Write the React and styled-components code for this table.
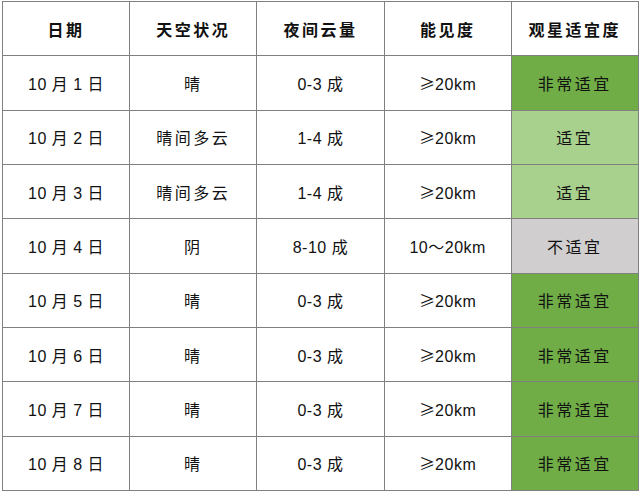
import React from 'react';
import styled, { createGlobalStyle } from 'styled-components';

const GlobalStyle = createGlobalStyle`
  html, body {
    margin: 0;
    padding: 0;
    background: #fff;
  }
`;

const rows = [
  { date: '10 月 1 日', sky: '晴', cloud: '0-3 成', vis: '20km', rate: '非常适宜', level: 'best' },
  { date: '10 月 2 日', sky: '晴间多云', cloud: '1-4 成', vis: '20km', rate: '适宜', level: 'good' },
  { date: '10 月 3 日', sky: '晴间多云', cloud: '1-4 成', vis: '20km', rate: '适宜', level: 'good' },
  { date: '10 月 4 日', sky: '阴', cloud: '8-10 成', vis: '10～20km', rate: '不适宜', level: 'bad' },
  { date: '10 月 5 日', sky: '晴', cloud: '0-3 成', vis: '20km', rate: '非常适宜', level: 'best' },
  { date: '10 月 6 日', sky: '晴', cloud: '0-3 成', vis: '20km', rate: '非常适宜', level: 'best' },
  { date: '10 月 7 日', sky: '晴', cloud: '0-3 成', vis: '20km', rate: '非常适宜', level: 'best' },
  { date: '10 月 8 日', sky: '晴', cloud: '0-3 成', vis: '20km', rate: '非常适宜', level: 'best' },
];

const levelColors = {
  best: '#70ad47',
  good: '#a9d18e',
  bad: '#d0cece',
};

const Page = styled.div`
  padding: 1px 0 0 2px;
`;

const Table = styled.table`
  width: 637px;
  height: 490px;
  border-collapse: collapse;
  table-layout: fixed;
  font-family: "Liberation Sans", "Noto Sans CJK SC", sans-serif;
  font-size: 16px;
  color: #111;
`;

const Row = styled.tr`
  height: 54px;
`;

const HeadCell = styled.th`
  border: 1px solid #808080;
  font-weight: 700;
  letter-spacing: 2.5px;
  text-align: center;
  vertical-align: middle;
  padding: 0;
`;

const Cell = styled.td`
  border: 1px solid #808080;
  text-align: center;
  vertical-align: middle;
  padding: 0;
  letter-spacing: ${(p) => (p.$wide ? '2.5px' : '0.5px')};
  background: ${(p) => (p.$level ? levelColors[p.$level] : '#fff')};
`;

const Geq = styled.span`
  font-family: "Noto Sans CJK SC", sans-serif;
  letter-spacing: 0;
`;

const App = () => (
  <Page>
    <GlobalStyle />
    <Table>
      <tbody>
        <Row>
          <HeadCell>日期</HeadCell>
          <HeadCell>天空状况</HeadCell>
          <HeadCell>夜间云量</HeadCell>
          <HeadCell>能见度</HeadCell>
          <HeadCell>观星适宜度</HeadCell>
        </Row>
        {rows.map((r) => (
          <Row key={r.date}>
            <Cell>{r.date}</Cell>
            <Cell $wide>{r.sky}</Cell>
            <Cell>{r.cloud}</Cell>
            <Cell>
              {r.vis === '20km' && <Geq>≥</Geq>}
              {r.vis}
            </Cell>
            <Cell $wide $level={r.level}>{r.rate}</Cell>
          </Row>
        ))}
      </tbody>
    </Table>
  </Page>
);

export default App;
